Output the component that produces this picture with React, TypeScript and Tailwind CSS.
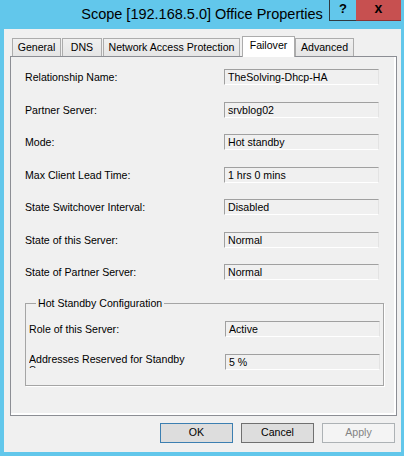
import React from "react";

interface Row {
  label: string;
  value: string;
  gap: string;
}

const rows: Row[] = [
  { label: "Relationship Name:", value: "TheSolving-Dhcp-HA", gap: "mt-0" },
  { label: "Partner Server:", value: "srvblog02", gap: "mt-[17px]" },
  { label: "Mode:", value: "Hot standby", gap: "mt-[16px]" },
  { label: "Max Client Lead Time:", value: "1 hrs 0 mins", gap: "mt-[17px]" },
  { label: "State Switchover Interval:", value: "Disabled", gap: "mt-[16px]" },
  { label: "State of this Server:", value: "Normal", gap: "mt-[17px]" },
  { label: "State of Partner Server:", value: "Normal", gap: "mt-[16px]" },
];

const tabs = [
  { name: "General", w: "w-[49px]", ml: "ml-0" },
  { name: "DNS", w: "w-[40px]", ml: "ml-[1px]" },
  { name: "Network Access Protection", w: "w-[137px]", ml: "ml-[1px]" },
  { name: "Failover", w: "w-[53px]", ml: "ml-[2px]", active: true },
  { name: "Advanced", w: "w-[59px]", ml: "ml-0" },
];

function Field({ value }: { value: string }) {
  return (
    <div className="h-[16px] w-[155px] shrink-0 border border-[#a0a0a0] border-b-white border-r-[#e3e3e3] bg-[#f0f0f0] pl-[3px] text-[10.6px] leading-[14px] text-black">
      {value}
    </div>
  );
}

export default function App() {
  return (
    <div
      className="flex h-[456px] w-[404px] flex-col bg-[#62c7eb] text-black"
      style={{ fontFamily: '"Liberation Sans", Arial, sans-serif' }}
    >
      {/* Title bar */}
      <div className="grid h-[29px] grid-cols-[1fr_auto_1fr]">
        <div />
        <div className="pt-[5px] text-[14.5px] leading-[18px]">
          Scope [192.168.5.0] Office Properties
        </div>
        <div className="flex items-start justify-end pr-[3px]">
          <div className="flex h-[21px] w-[27px] items-center justify-center border-b border-l border-[#2f3a40] pb-[2px] text-[13px] font-bold">
            ?
          </div>
          <div className="flex h-[21px] w-[45px] items-center justify-center border-b border-[#8a3535] bg-[#c75050] pb-[3px] text-[14px] font-bold">
            x
          </div>
        </div>
      </div>

      {/* Client area */}
      <div className="ml-[4px] mr-[3px] flex h-[423px] flex-col bg-[#f0f0f0] pl-[6px] pr-[4px] pt-[7px]">
        {/* Tabs */}
        <div className="relative z-10 flex h-[20px] items-end pl-[2px] text-[10.6px]">
          {tabs.map((t) =>
            t.active ? (
              <div
                key={t.name}
                className={`${t.w} ${t.ml} -mb-[1px] flex h-[21px] items-center justify-center border border-b-0 border-[#acacac] bg-white pb-[2px]`}
              >
                {t.name}
              </div>
            ) : (
              <div
                key={t.name}
                className={`${t.w} ${t.ml} flex h-[18px] items-center justify-center border border-b-0 border-[#acacac] bg-gradient-to-b from-[#f0f0f0] to-[#e5e5e5]`}
              >
                {t.name}
              </div>
            )
          )}
        </div>

        {/* Panel */}
        <div className="h-[360px] w-[387px] border border-[#8c8e94] bg-white pb-[2px] pr-[2px]">
          <div className="flex h-full flex-col bg-[#f0f0f0] pl-[14px] pt-[12px] text-[10.6px]">
            {rows.map((r) => (
              <div key={r.label} className={`${r.gap} flex h-[16px] items-center`}>
                <div className="w-[199px] shrink-0 leading-[14px]">{r.label}</div>
                <Field value={r.value} />
              </div>
            ))}

            <fieldset className="mt-[17px] h-[89px] w-[357px] border border-[#a5a5a5] px-[3px] shadow-[1px_1px_0_white]">
              <legend className="ml-[7px] px-[2px] leading-[13px]">Hot Standby Configuration</legend>
              <div className="flex flex-col overflow-hidden">
                <div className="mt-[11px] flex h-[16px] items-center">
                  <div className="w-[196px] shrink-0 leading-[14px]">Role of this Server:</div>
                  <Field value="Active" />
                </div>
                <div className="mt-[17px] flex h-[16px] items-start">
                  <div className="w-[196px] shrink-0">
                    <div className="h-[14px] w-[162px] overflow-hidden leading-[11px]">
                      Addresses Reserved for Standby Server:
                    </div>
                  </div>
                  <Field value="5 %" />
                </div>
              </div>
            </fieldset>
          </div>
        </div>

        {/* Buttons */}
        <div className="mt-[7px] flex justify-end gap-[8px] pr-[2px] text-[10.6px]">
          <button className="flex h-[20px] w-[73px] items-center justify-center border border-[#3c7fb1] bg-[#dddddd]">
            OK
          </button>
          <button className="flex h-[20px] w-[73px] items-center justify-center border border-[#707070] bg-[#dddddd]">
            Cancel
          </button>
          <button className="flex h-[20px] w-[73px] items-center justify-center border border-[#adb2b5] bg-[#f4f4f4] text-[#838383]">
            Apply
          </button>
        </div>
      </div>
    </div>
  );
}
